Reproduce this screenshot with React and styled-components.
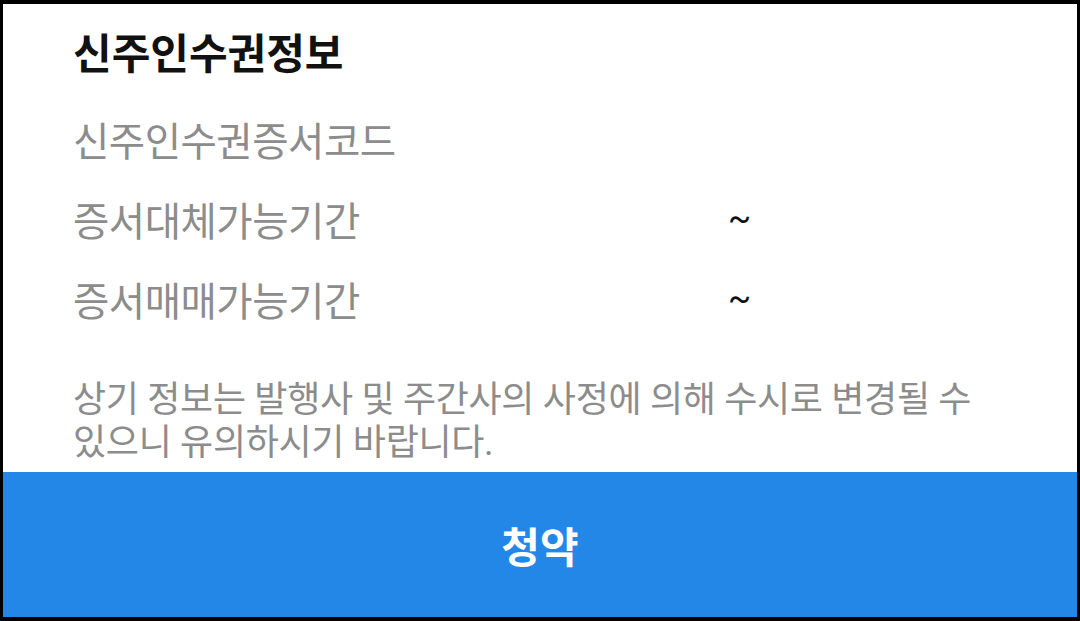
import styled, { createGlobalStyle } from "styled-components";

const GlobalStyle = createGlobalStyle`
    html, body {
        margin: 0;
        padding: 0;
        background: #000;
    }
    body {
        font-family: Roboto, "Noto Sans CJK KR", sans-serif;
    }
`;

// 신주인수권 정보 항목
const rows = [
    { label: "신주인수권증서코드", value: "" },
    { label: "증서대체가능기간", value: "~" },
    { label: "증서매매가능기간", value: "~" },
];

export default function App() {
    return (
        <>
            <GlobalStyle />
            <Frame>
                <Sheet>
                    <Content>
                        <Title>신주인수권정보</Title>
                        <InfoList>
                            {rows.map((row) => (
                                <InfoRow key={row.label}>
                                    <Label>{row.label}</Label>
                                    <Value>{row.value}</Value>
                                </InfoRow>
                            ))}
                        </InfoList>
                        <Notice>
                            상기 정보는 발행사 및 주간사의 사정에 의해 수시로 변경될 수
                            있으니 유의하시기 바랍니다.
                        </Notice>
                    </Content>
                    <SubmitButton type="button">청약</SubmitButton>
                </Sheet>
            </Frame>
        </>
    );
}

const Frame = styled.div`
    width: 1080px;
    height: 621px;
    padding: 4px 3px;
    box-sizing: border-box;
    background: #000;
`;

const Sheet = styled.div`
    height: 100%;
    display: flex;
    flex-direction: column;
    background: #fff;
`;

const Content = styled.div`
    flex: 1;
    padding: 29px 60px 0 70px;
    box-sizing: border-box;
`;

const Title = styled.h2`
    margin: 0;
    font-size: 42px;
    font-weight: 700;
    line-height: 44px;
    color: #111;
`;

const InfoList = styled.div`
    display: flex;
    flex-direction: column;
    margin-top: 21px;
`;

const InfoRow = styled.div`
    display: grid;
    grid-template-columns: 655px 1fr;
    align-items: center;
    height: 80px;
`;

const Label = styled.span`
    font-size: 39.5px;
    color: #8c8c8c;
    letter-spacing: -0.5px;
`;

const Value = styled.span`
    font-size: 34px;
    color: #111;
`;

const Notice = styled.p`
    margin: 41px 0 0;
    font-size: 36px;
    line-height: 43px;
    color: #8c8c8c;
    letter-spacing: -0.3px;
    word-break: keep-all;
`;

const SubmitButton = styled.button`
    height: 145px;
    flex-shrink: 0;
    border: none;
    background: #2387e8;
    color: #fff;
    font-family: inherit;
    font-size: 42px;
    font-weight: 700;
    cursor: pointer;
`;
